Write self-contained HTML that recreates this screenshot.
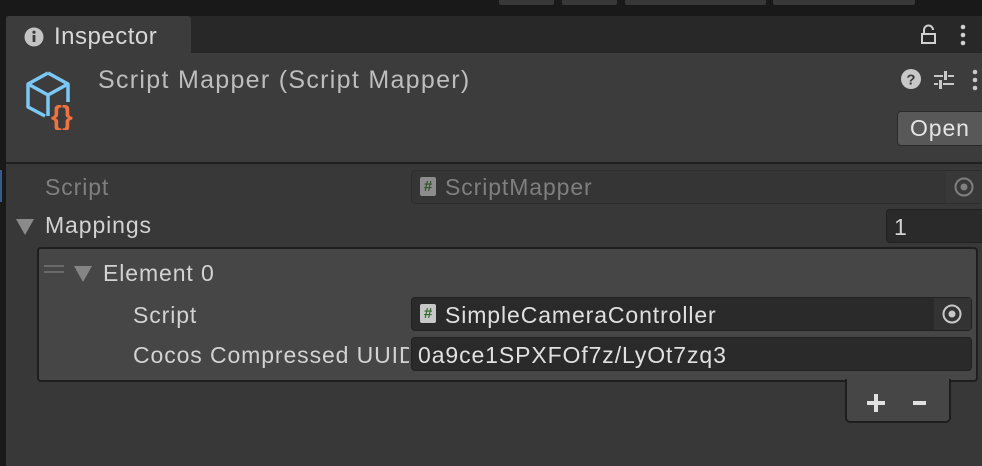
<!DOCTYPE html>
<html><head><style>
*{margin:0;padding:0;box-sizing:border-box}
body{width:982px;height:466px;overflow:hidden;background:#383838;font-family:"Liberation Sans",sans-serif;position:relative;color:#d2d2d2}
.a{position:absolute}
.t{position:absolute;font-size:23px;letter-spacing:0.9px;white-space:nowrap;line-height:26px}
.fld{position:absolute;border-radius:4px;border:1px solid #212121;background:#2a2a2a}
.tri{position:absolute;width:0;height:0;border-left:9px solid transparent;border-right:9px solid transparent;border-top:16px solid #8a8a8a}
.ic{position:absolute;width:16px;height:19px;background:#c8c8c8;border-radius:2px;color:#2f6b2a;font-size:15px;font-weight:bold;text-align:center;line-height:19px;letter-spacing:0}
</style></head><body>
<div class="a" style="left:0;top:0;width:982px;height:16px;background:#191919"></div>
<div class="a" style="left:499px;top:0;width:55px;height:5px;background:#383838;border-radius:0 0 2px 2px"></div>
<div class="a" style="left:562px;top:0;width:55px;height:5px;background:#383838;border-radius:0 0 2px 2px"></div>
<div class="a" style="left:625px;top:0;width:141px;height:5px;background:#383838;border-radius:0 0 2px 2px"></div>
<div class="a" style="left:773px;top:0;width:142px;height:5px;background:#383838;border-radius:0 0 2px 2px"></div>
<div class="a" style="left:6px;top:16px;width:976px;height:37px;background:#282828"></div>
<div class="a" style="left:0;top:16px;width:6px;height:450px;background:#191919"></div>
<div class="a" style="left:0;top:170px;width:2px;height:32px;background:#3a5a8a"></div>
<div class="a" style="left:6px;top:16px;width:185px;height:40px;background:#3c3c3c;border-radius:4px 4px 0 0"></div>
<div class="a" style="left:6px;top:53px;width:976px;height:109px;background:#3c3c3c"></div>
<div class="a" style="left:6px;top:162px;width:976px;height:2px;background:#1f1f1f"></div>
<svg class="a" style="left:24px;top:27px" width="20" height="20"><circle cx="10" cy="10" r="9.5" fill="#c4c4c4"/><rect x="8.6" y="8" width="2.8" height="7" fill="#3c3c3c"/><circle cx="10" cy="5.2" r="1.6" fill="#3c3c3c"/></svg>
<div class="t" style="left:54px;top:24px;color:#d8d8d8;font-size:24px;letter-spacing:0.5px">Inspector</div>
<svg class="a" style="left:920px;top:22px" width="20" height="24"><path d="M4 11 V8 a4.5 4.5 0 0 1 9 0" stroke="#d0d0d0" stroke-width="2" fill="none"/><rect x="2" y="12" width="13" height="9" fill="none" stroke="#d0d0d0" stroke-width="2"/></svg>
<svg class="a" style="left:958px;top:24px" width="10" height="22"><circle cx="5" cy="3" r="2.3" fill="#d0d0d0"/><circle cx="5" cy="11" r="2.3" fill="#d0d0d0"/><circle cx="5" cy="19" r="2.3" fill="#d0d0d0"/></svg>
<svg class="a" style="left:22px;top:68px" width="64" height="62"><path d="M26 5 L46 16 V34 M26 5 L6 16 V39 L23 48 M6 16 L26 27 L46 16 M26 27 V48" stroke="#7cc8f5" stroke-width="3.5" fill="none" stroke-linejoin="round"/><text x="29" y="57" font-family="Liberation Sans" font-weight="bold" font-size="28" fill="#f07240">{}</text></svg>
<div class="t" style="left:98px;top:67px;font-size:25px;letter-spacing:1.3px;color:#bdbdbd">Script Mapper (Script Mapper)</div>
<svg class="a" style="left:901px;top:69px" width="20" height="20"><circle cx="10" cy="10" r="10" fill="#c8c8c8"/><text x="10" y="15.5" text-anchor="middle" font-family="Liberation Sans" font-weight="bold" font-size="15" fill="#3c3c3c">?</text></svg>
<svg class="a" style="left:933px;top:70px" width="22" height="20"><path d="M1 6 H10 M15 6 H21 M1 14 H5 M10 14 H21" stroke="#c8c8c8" stroke-width="2"/><rect x="11" y="1" width="3" height="9" fill="#c8c8c8"/><rect x="6" y="10" width="3" height="9" fill="#c8c8c8"/></svg>
<svg class="a" style="left:970px;top:69px" width="10" height="22"><circle cx="5" cy="3" r="2.3" fill="#c8c8c8"/><circle cx="5" cy="11" r="2.3" fill="#c8c8c8"/><circle cx="5" cy="19" r="2.3" fill="#c8c8c8"/></svg>
<div class="a" style="left:897px;top:111px;width:90px;height:35px;background:#585858;border:1px solid #2a2a2a;border-radius:4px"></div>
<div class="t" style="left:910px;top:115px;color:#e4e4e4">Open</div>

<div class="t" style="left:45px;top:174px;color:#7f7f7f">Script</div>
<div class="fld" style="left:411px;top:170px;width:572px;height:34px;background:#353535;border-color:#2d2d2d"></div>
<div class="a" style="left:946px;top:171px;width:36px;height:32px;background:#383838"></div>
<div class="ic" style="left:420px;top:177px;opacity:.6">#</div>
<div class="t" style="left:445px;top:174px;color:#7f7f7f">ScriptMapper</div>
<svg class="a" style="left:953px;top:176px" width="22" height="22"><circle cx="11" cy="11" r="8.5" stroke="#7f7f7f" stroke-width="2" fill="none"/><circle cx="11" cy="11" r="3.5" fill="#7f7f7f"/></svg>

<div class="tri" style="left:16px;top:219px"></div>
<div class="t" style="left:45px;top:212px;color:#d2d2d2">Mappings</div>
<div class="fld" style="left:886px;top:209px;width:100px;height:34px"></div>
<div class="t" style="left:894px;top:214px">1</div>

<div class="a" style="left:37px;top:247px;width:941px;height:135px;background:#464646;border:2px solid #1e1e1e;border-radius:4px"></div>
<div class="a" style="left:845px;top:379px;width:106px;height:44px;background:#464646;border:2px solid #1e1e1e;border-top:none;border-radius:0 0 5px 5px"></div>
<div class="a" style="left:847px;top:376px;width:102px;height:6px;background:#464646"></div>
<div class="a" style="left:44px;top:265px;width:20px;height:2px;background:#6a6a6a"></div>
<div class="a" style="left:44px;top:271px;width:20px;height:2px;background:#6a6a6a"></div>
<div class="tri" style="left:74px;top:266px;border-top-color:#858585"></div>
<div class="t" style="left:103px;top:260px">Element 0</div>

<div class="t" style="left:133px;top:302px">Script</div>
<div class="fld" style="left:411px;top:297px;width:561px;height:34px"></div>
<div class="a" style="left:934px;top:298px;width:37px;height:32px;background:#333"></div>
<div class="ic" style="left:420px;top:304px">#</div>
<div class="t" style="left:445px;top:302px;color:#e0e0e0">SimpleCameraController</div>
<svg class="a" style="left:941px;top:303px" width="22" height="22"><circle cx="11" cy="11" r="8.5" stroke="#c8c8c8" stroke-width="2" fill="none"/><circle cx="11" cy="11" r="3.5" fill="#c8c8c8"/></svg>

<div class="t" style="left:133px;top:342px;width:276px;overflow:hidden">Cocos Compressed UUID</div>
<div class="fld" style="left:411px;top:337px;width:561px;height:34px"></div>
<div class="t" style="left:418px;top:342px;color:#e0e0e0">0a9ce1SPXFOf7z/LyOt7zq3</div>

<div class="a" style="left:867px;top:401px;width:18px;height:4px;background:#e0e0e0"></div>
<div class="a" style="left:874px;top:394px;width:4px;height:18px;background:#e0e0e0"></div>
<div class="a" style="left:913px;top:401px;width:13px;height:4px;background:#e0e0e0"></div>
</body></html>
